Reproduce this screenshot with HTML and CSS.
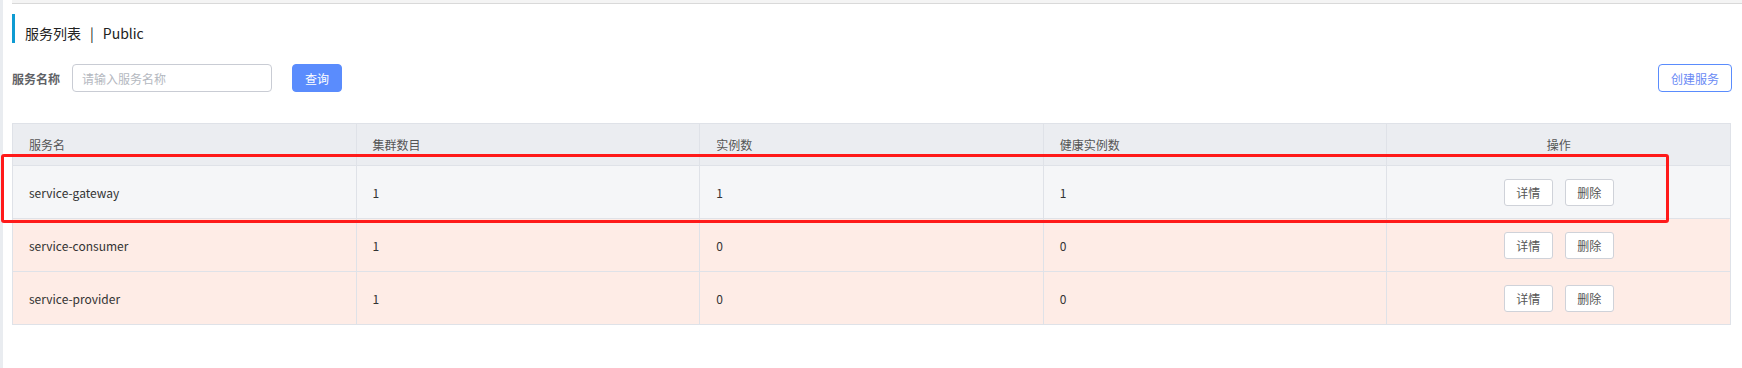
FILE: index.html
```html
<!DOCTYPE html>
<html lang="zh-CN">

<head>
    <meta charset="UTF-8">
    <meta name="viewport" content="width=device-width, initial-scale=1.0">
    <title>服务列表</title>
    <link rel="stylesheet" href="styles.css">
</head>

<body>
    <div class="page">
        <div class="topbar"></div>
        <div class="main">
            <div class="title">服务列表<span class="sep">|</span>Public</div>

            <div class="search">
                <label class="label">服务名称</label>
                <input type="text" class="input" placeholder="请输入服务名称">
                <button class="btn primary">查询</button>
                <button class="btn plain create">创建服务</button>
            </div>

            <table class="list">
                <tr>
                    <th>服务名</th>
                    <th>集群数目</th>
                    <th>实例数</th>
                    <th>健康实例数</th>
                    <th class="center">操作</th>
                </tr>
                <tr class="hover">
                    <td>service-gateway</td>
                    <td>1</td>
                    <td>1</td>
                    <td>1</td>
                    <td class="center">
                        <div class="ops"><button class="btn small">详情</button><button class="btn small">删除</button></div>
                    </td>
                </tr>
                <tr class="warn">
                    <td>service-consumer</td>
                    <td>1</td>
                    <td>0</td>
                    <td>0</td>
                    <td class="center">
                        <div class="ops"><button class="btn small">详情</button><button class="btn small">删除</button></div>
                    </td>
                </tr>
                <tr class="warn">
                    <td>service-provider</td>
                    <td>1</td>
                    <td>0</td>
                    <td>0</td>
                    <td class="center">
                        <div class="ops"><button class="btn small">详情</button><button class="btn small">删除</button></div>
                    </td>
                </tr>
            </table>
        </div>
    </div>

    <!-- 标注框 -->
    <div class="mark"></div>
</body>

</html>
```

FILE: styles.css
```css
* {
    padding: 0;
    margin: 0;
    box-sizing: border-box;
}

body {
    font-family: "Noto Sans CJK SC", "Noto Sans", sans-serif;
    font-size: 12px;
    color: #333;
    background: #fff;
}

div.page {
    min-height: 100vh;
    border-left: 3px solid #e9ecf0;
}

div.topbar {
    height: 4px;
    margin-left: 9px;
    background: #f4f4f4;
    border-bottom: 1px solid #d9d9d9;
}

div.main {
    padding: 0 10px 0 9px;
}

div.title {
    height: 29px;
    margin-top: 10px;
    padding: 9px 0 0 10px;
    border-left: 3px solid #0f9bd2;
    font-size: 14px;
    line-height: 20px;
    color: #222;
}

.sep {
    margin: 0 9px;
}

div.search {
    display: flex;
    align-items: center;
    margin-top: 21px;
    height: 28px;
}

.label {
    font-weight: bold;
    color: #606266;
    margin-right: 12px;
}

.input {
    width: 200px;
    height: 28px;
    padding: 0 9px;
    border: 1px solid #c9ccd4;
    border-radius: 4px;
    font-family: inherit;
    font-size: 12px;
    outline: none;
}

.input::placeholder {
    color: #b4b8c0;
}

.btn {
    font-family: inherit;
    font-size: 12px;
    height: 28px;
    padding: 0 12px;
    border-radius: 4px;
    cursor: pointer;
    background: #fff;
}

.btn.primary {
    margin-left: 20px;
    width: 50px;
    background: #5a8cfd;
    border: 1px solid #5a8cfd;
    color: #fff;
}

.btn.create {
    margin-left: auto;
    width: 74px;
    padding: 0;
    border: 1px solid #5a8cfd;
    color: #6a8af5;
}

table.list {
    width: 1719px;
    margin-top: 31px;
    border-collapse: collapse;
    table-layout: fixed;
    border: 1px solid #dfe2e8;
}

th,
td {
    border: 1px solid #dfe2e8;
    padding: 0 16px;
    text-align: left;
    font-weight: normal;
}

th {
    height: 42px;
    background: #ebedf1;
    color: #555;
}

td {
    height: 53px;
}

th.center,
td.center {
    text-align: center;
}

tr.hover td {
    background: #f5f6f8;
}

tr.warn td {
    background: #feece6;
}

div.ops {
    display: inline-flex;
    gap: 12px;
    vertical-align: middle;
}

.btn.small {
    height: 27px;
    width: 49px;
    padding: 0;
    border: 1px solid #cfd2d9;
    border-radius: 3px;
    color: #555;
}

div.mark {
    position: absolute;
    left: 1px;
    top: 154px;
    width: 1668px;
    height: 69px;
    border: 3px solid #ff1a1a;
    border-radius: 3px;
}
```
